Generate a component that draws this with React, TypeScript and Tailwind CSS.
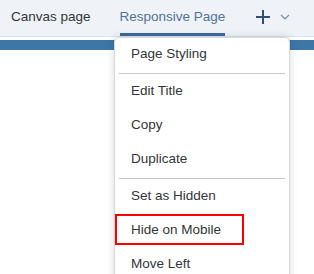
import React from "react";

const items: (string | null)[] = [
  "Page Styling",
  null,
  "Edit Title",
  "Copy",
  "Duplicate",
  null,
  "Set as Hidden",
  "Hide on Mobile",
  "Move Left",
];

export default function App() {
  return (
    <div className="relative w-[314px] h-[274px] overflow-hidden bg-white font-['Liberation_Sans',Arial,sans-serif] text-[13.5px]">
      {/* Tab bar */}
      <div className="flex items-stretch h-[37px] bg-[#eff2f6] border-b border-[#dde3ea]">
        <div className="flex items-center pl-[11px] pr-[29px] pb-[2px] text-[#32363a]">
          Canvas page
        </div>
        <div className="flex items-center border-b-[3px] border-[#3d6c9c] pt-px text-[#4f7398]">
          Responsive Page
        </div>
        <div className="flex items-center gap-[9px] pl-[30px] pb-[2px]">
          <svg width="16" height="16" viewBox="0 0 16 16">
            <path d="M8 1v14M1 8h14" stroke="#2f4f6e" strokeWidth="2" />
          </svg>
          <svg width="10" height="6" viewBox="0 0 10 6">
            <path d="M1 1l4 4 4-4" stroke="#6f8eac" strokeWidth="1.2" fill="none" />
          </svg>
        </div>
      </div>

      {/* Page header strip */}
      <div className="mt-[3px] h-[10px] bg-[#3d77a8]" />

      {/* Context menu */}
      <div className="absolute left-[114px] top-[37px] w-[176px] bg-white border border-[#d5d8dc] rounded-t-[5px] shadow-[0_0_8px_rgba(0,0,0,0.15)] text-[#32363a]">
        {items.map((item, i) =>
          item === null ? (
            <div key={i} className="mx-[4px] my-px h-px bg-[#c8c8c8]" />
          ) : (
            <div key={i} className="relative flex items-center h-[34px] pl-[16px] pb-[2px]">
              {item}
              {item === "Hide on Mobile" && (
                <div className="absolute left-0 top-0 w-[129px] h-[31px] border-2 border-[#ff0000]" />
              )}
            </div>
          )
        )}
      </div>
    </div>
  );
}
